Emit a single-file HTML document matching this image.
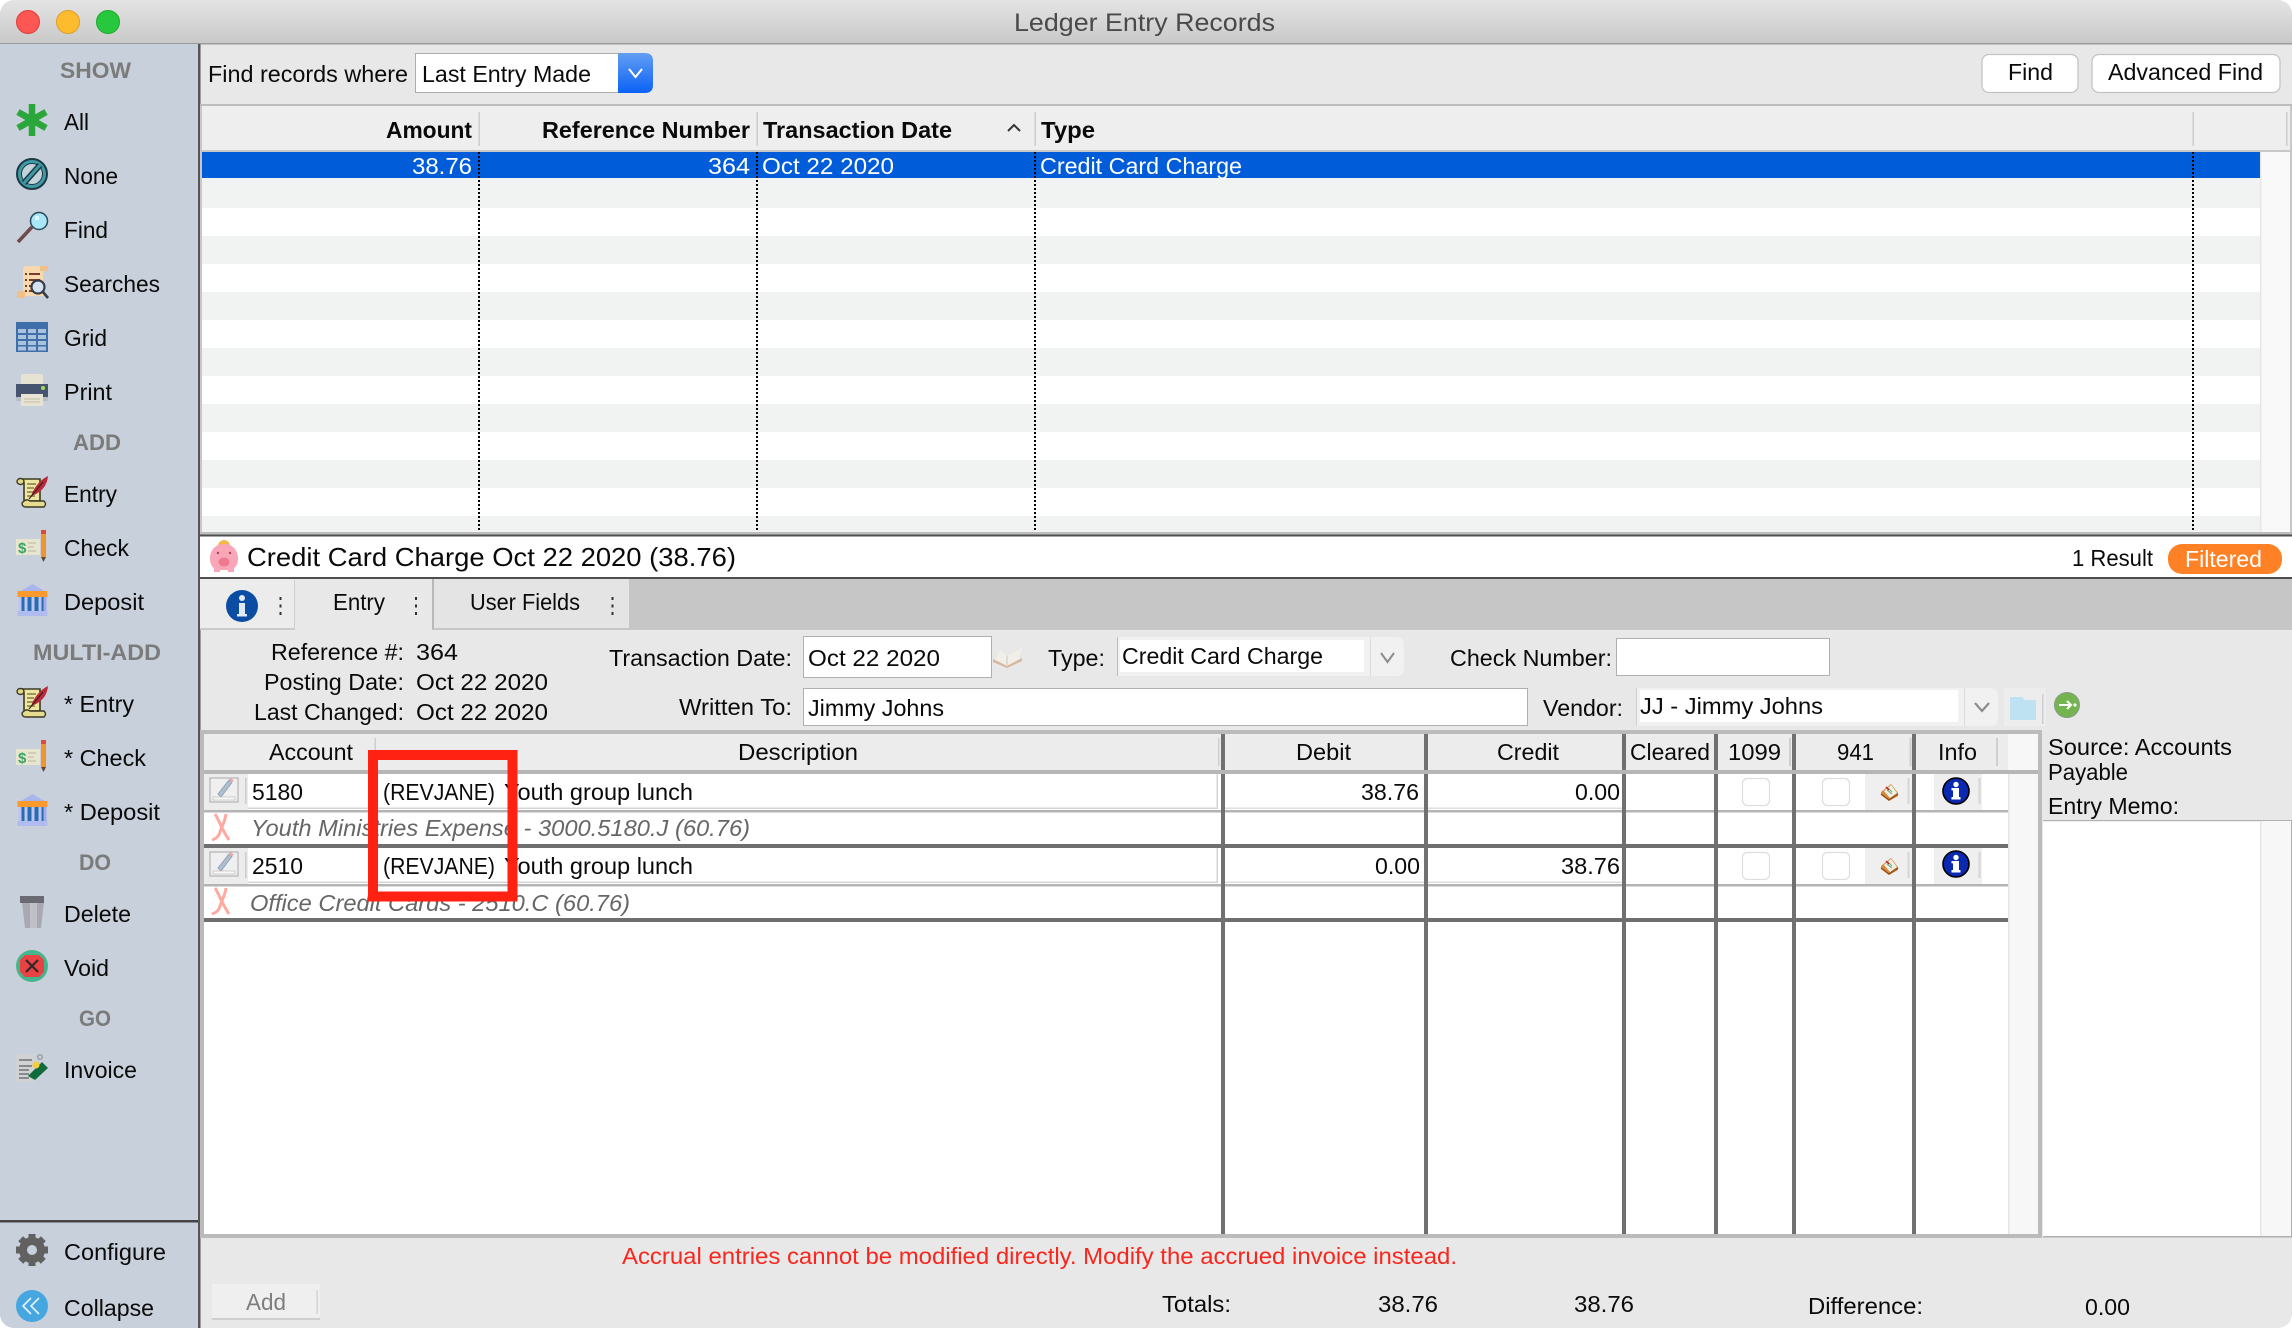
<!DOCTYPE html>
<html lang="en">
<head>
<meta charset="utf-8">
<title>Ledger Entry Records</title>
<style>
html,body{margin:0;padding:0;background:#fff;width:2292px;height:1328px;overflow:hidden}
svg{display:block}
text{font-family:"Liberation Sans",Arial,sans-serif;font-size:23px;fill:#0a0a0a;white-space:pre}
.b{font-weight:bold}
.h{font-weight:bold;font-size:22px;fill:#7b7b7b}
.i{font-style:italic;fill:#666}
.w{fill:#fff}
</style>
</head>
<body>
<svg xmlns="http://www.w3.org/2000/svg" width="2292" height="1328" viewBox="0 0 2292 1328">
<defs>
<linearGradient id="tb" x1="0" y1="0" x2="0" y2="1"><stop offset="0" stop-color="#e4e4e4"/><stop offset="1" stop-color="#c9c9c9"/></linearGradient>
<linearGradient id="bl" x1="0" y1="0" x2="0" y2="1"><stop offset="0" stop-color="#639ef2"/><stop offset="1" stop-color="#0a62f6"/></linearGradient>
<clipPath id="win"><rect x="0" y="0" width="2292" height="1328" rx="14"/></clipPath>
<g id="ientry">
<path d="M3 3H24V25H8V7Q8 4 3 5Z" fill="#efe6a0" stroke="#3c3a22" stroke-width="1.600"/>
<ellipse cx="4.500" cy="5.500" rx="3.500" ry="3" fill="#e2d888" stroke="#3c3a22" stroke-width="1.400"/>
<path d="M6 27Q10 22 14 25H28Q31 28 28 31H10Q6 31 6 27Z" fill="#e6dc90" stroke="#3c3a22" stroke-width="1.400"/>
<path d="M11 8h9M11 12h7M11 16h8M11 20h8" stroke="#6a6638" stroke-width="1.300"/>
<path d="M15 20Q20 6 32 0Q31 12 20 18Z" fill="#b82a3a"/>
<path d="M13 23L27 6" stroke="#3a1a1a" stroke-width="1"/>
</g>
<g id="icheck">
<rect x="0" y="9" width="24" height="16" fill="#e8e5cf"/>
<text x="2" y="23" style="font-size:15px;font-weight:bold;fill:#3aa46a">$</text>
<path d="M12 13h8M12 17h6M12 21h8" stroke="#c2c0a8" stroke-width="1.200"/>
<rect x="25" y="4" width="5" height="23" fill="#f0942c"/>
<rect x="25" y="0" width="5" height="4" fill="#de4a3a"/>
<path d="M25 27h5l-2.500 5z" fill="#5c4a3a"/>
</g>
<g id="idep">
<path d="M15 0L30 9H0Z" fill="#a9b6ee"/>
<rect x="0" y="7" width="30" height="6" fill="#fb9a2c"/>
<rect x="1" y="13" width="28" height="15" fill="#2a6cb0"/>
<rect x="7" y="13" width="3" height="15" fill="#bcc6f2"/><rect x="14" y="13" width="3" height="15" fill="#bcc6f2"/><rect x="21" y="13" width="3" height="15" fill="#bcc6f2"/>
<rect x="1" y="13" width="3" height="15" fill="#bcc6f2"/><rect x="26" y="13" width="3" height="15" fill="#a0acea"/>
<rect x="0" y="27" width="30" height="5" fill="#b0bbf0"/>
</g>
<g id="ipen">
<rect x="0" y="0" width="28" height="24" fill="#efefef" stroke="#a8a8a8" stroke-width="1"/>
<path d="M8 16L19 2l3 2.500L11 19z" fill="#aebfd0" stroke="#8a9ab0" stroke-width=".8"/>
<path d="M19 2l1.500-2 3.500 2.500-2 2z" fill="#eaa"/>
<path d="M3 19h22v3H3z" fill="#f7f7f7" stroke="#c4c4c4" stroke-width=".8"/>
</g>
<g id="ix" fill="none" stroke="#ffa9a0" stroke-width="3">
<path d="M3 0C6 4 10 16 17 26M14 0C13 8 9 14 8 18C7 22 5 24 0 26"/>
</g>
<g id="ibox">
<path d="M1 9L11 1 18 10 18 13 9 18 1 12Z" fill="#d98a3c"/>
<path d="M4 8L11 2 17 10 10 15Z" fill="#eef2e6"/>
<path d="M7 7l5 4M8 5l4 4" stroke="#7fb08a" stroke-width="1.200"/>
<path d="M6 4l3 3" stroke="#c02020" stroke-width="1.400"/>
<path d="M1 11L9 17 18 11" fill="none" stroke="#94501c" stroke-width="1.400"/>
</g>
<g id="iinfo">
<circle cx="13" cy="13" r="13" fill="#0a28b0" stroke="#000" stroke-width="1.600"/>
<rect x="10" y="10" width="6" height="11" fill="#fff"/><rect x="8.500" y="19" width="9" height="2.500" fill="#fff"/><rect x="8.500" y="10" width="5" height="2.400" fill="#fff"/>
<circle cx="13" cy="6.500" r="2.700" fill="#fff"/>
</g>
</defs>

<rect width="2292" height="1328" fill="#fff"/>
<g clip-path="url(#win)">
<rect width="2292" height="1328" fill="#e8e8e8"/>

<!-- Title bar -->
<rect width="2292" height="43" fill="url(#tb)"/>
<rect y="43" width="2292" height="1.500" fill="#9c9c9c"/>
<circle cx="28" cy="22" r="11.500" fill="#fc5753" stroke="#df3d38" stroke-width="1"/>
<circle cx="68" cy="22" r="11.500" fill="#fdbc2e" stroke="#de9f24" stroke-width="1"/>
<circle cx="108" cy="22" r="11.500" fill="#28c83e" stroke="#1aab2a" stroke-width="1"/>
<text x="1014" y="31" textLength="261" lengthAdjust="spacingAndGlyphs" style="font-size:25px;fill:#4a4a4a">Ledger Entry Records</text>

<!-- Sidebar -->
<rect y="44" width="198" height="1284" fill="#c8d0db"/>
<rect x="198" y="44" width="2.500" height="1284" fill="#555"/>
<rect y="1220" width="198" height="2.500" fill="#444"/>

<text class="h" x="60" y="78" textLength="71" lengthAdjust="spacingAndGlyphs">SHOW</text>
<text x="64" y="130" textLength="25" lengthAdjust="spacingAndGlyphs">All</text>
<text x="64" y="184" textLength="54" lengthAdjust="spacingAndGlyphs">None</text>
<text x="64" y="238" textLength="44" lengthAdjust="spacingAndGlyphs">Find</text>
<text x="64" y="292" textLength="96" lengthAdjust="spacingAndGlyphs">Searches</text>
<text x="64" y="346" textLength="43" lengthAdjust="spacingAndGlyphs">Grid</text>
<text x="64" y="400" textLength="48" lengthAdjust="spacingAndGlyphs">Print</text>
<text class="h" x="73" y="450" textLength="48" lengthAdjust="spacingAndGlyphs">ADD</text>
<text x="64" y="502" textLength="53" lengthAdjust="spacingAndGlyphs">Entry</text>
<text x="64" y="556" textLength="65" lengthAdjust="spacingAndGlyphs">Check</text>
<text x="64" y="610" textLength="80" lengthAdjust="spacingAndGlyphs">Deposit</text>
<text class="h" x="33" y="660" textLength="128" lengthAdjust="spacingAndGlyphs">MULTI-ADD</text>
<text x="64" y="712" textLength="70" lengthAdjust="spacingAndGlyphs">* Entry</text>
<text x="64" y="766" textLength="82" lengthAdjust="spacingAndGlyphs">* Check</text>
<text x="64" y="820" textLength="96" lengthAdjust="spacingAndGlyphs">* Deposit</text>
<text class="h" x="79" y="870" textLength="32" lengthAdjust="spacingAndGlyphs">DO</text>
<text x="64" y="922" textLength="67" lengthAdjust="spacingAndGlyphs">Delete</text>
<text x="64" y="976" textLength="45" lengthAdjust="spacingAndGlyphs">Void</text>
<text class="h" x="79" y="1026" textLength="32" lengthAdjust="spacingAndGlyphs">GO</text>
<text x="64" y="1078" textLength="73" lengthAdjust="spacingAndGlyphs">Invoice</text>
<text x="64" y="1260" textLength="102" lengthAdjust="spacingAndGlyphs">Configure</text>
<text x="64" y="1316" textLength="90" lengthAdjust="spacingAndGlyphs">Collapse</text>

<!-- sidebar icons -->
<g stroke="#2aa63a" stroke-width="6.500" fill="none"><path d="M32 104V136M18 112L46 128M46 112L18 128"/></g>
<circle cx="32" cy="174" r="15" fill="#3f9aa6" stroke="#1c3a44" stroke-width="2"/>
<circle cx="32" cy="174" r="10.500" fill="#c4d2da" stroke="#1c3a44" stroke-width="1"/>
<path d="M24 183L40 165" stroke="#1c3a44" stroke-width="6"/>
<path d="M24 183L40 165" stroke="#3f9aa6" stroke-width="3"/>
<path d="M18 242L32 227" stroke="#6f4a4a" stroke-width="3.500"/>
<circle cx="39" cy="221" r="8.500" fill="#a8e6f8" stroke="#2a4a5a" stroke-width="1.500"/>
<circle cx="37" cy="218" r="2" fill="#e8fbff"/>
<!-- searches -->
<path d="M17 291H23V270Q23 266 27 266H48V271H43V296H17Z" fill="#f8d8ae"/>
<rect x="17" y="291" width="8" height="7" fill="#f0c088"/>
<rect x="40" y="266" width="8" height="5" fill="#f0c088"/>
<g stroke="#7a3a2a" stroke-width="2">
<path d="M25 274h2M29 274h11M25 280h2M29 280h11M25 286h2M29 286h6M25 291h2M29 291h4"/>
</g>
<circle cx="38" cy="287" r="6.500" fill="#d3e3f2" stroke="#333c48" stroke-width="2.200"/>
<path d="M43 292l5 6" stroke="#333c48" stroke-width="2.600"/>
<!-- grid -->
<rect x="16" y="322" width="32" height="30" fill="#3f6fa8"/>
<g fill="#a9c2dd">
<rect x="18" y="329" width="8" height="4"/><rect x="28" y="329" width="8" height="4"/><rect x="38" y="329" width="8" height="4"/>
<rect x="18" y="335" width="8" height="4"/><rect x="28" y="335" width="8" height="4"/><rect x="38" y="335" width="8" height="4"/>
<rect x="18" y="341" width="8" height="4"/><rect x="28" y="341" width="8" height="4"/><rect x="38" y="341" width="8" height="4"/>
<rect x="18" y="346.500" width="8" height="4"/><rect x="28" y="346.500" width="8" height="4"/><rect x="38" y="346.500" width="8" height="4"/>
</g>
<!-- print -->
<rect x="21" y="374" width="22" height="12" fill="#e7e3d2"/>
<rect x="16" y="384" width="32" height="13" fill="#475470"/>
<rect x="16" y="397" width="32" height="4" fill="#b9bdc6"/>
<circle cx="43" cy="388" r="2" fill="#9ede5a"/>
<rect x="21" y="394" width="22" height="12" fill="#e7e3d2"/>
<path d="M24 399h16M24 402h16" stroke="#c4bfa8" stroke-width="1"/>
<use href="#ientry" x="16" y="476"/>
<use href="#icheck" x="16" y="530"/>
<use href="#idep" x="17.500" y="584"/>
<use href="#ientry" x="16" y="686"/>
<use href="#icheck" x="16" y="740"/>
<use href="#idep" x="17.500" y="794"/>
<!-- delete -->
<path d="M22 902H44L41 928H25Z" fill="#a9a9b2"/>
<path d="M30 902H37V928H30Z" fill="#c0c0c8"/>
<rect x="20" y="896" width="24" height="7" fill="#6a6a72"/>
<!-- void -->
<circle cx="32" cy="966" r="16" fill="#46b48c"/>
<path d="M25 955H39L44 960V972L39 977H25L20 972V960Z" fill="#e84242"/>
<path d="M26 960L38 972M38 960L26 972" stroke="#33262a" stroke-width="2.200"/>
<!-- invoice -->
<rect x="16" y="1054" width="19" height="28" fill="#d0d2d4"/>
<path d="M19 1060h13M19 1066h13M19 1070h10M19 1074h10M19 1078h10" stroke="#6f7274" stroke-width="1.500"/>
<path d="M28 1076L42 1062 48 1068 35 1080Z" fill="#0f6b3c"/>
<circle cx="36" cy="1065" r="3.500" fill="#f8cc3a"/>
<circle cx="40" cy="1057" r="2.300" fill="none" stroke="#888" stroke-width="1"/>
<!-- gear -->
<g transform="translate(32 1250)" fill="#616161">
<circle r="9" fill="none" stroke="#616161" stroke-width="8"/>
<rect x="-3.500" y="-16" width="7" height="6"/>
<rect x="-3.500" y="-16" width="7" height="6" transform="rotate(45)"/>
<rect x="-3.500" y="-16" width="7" height="6" transform="rotate(90)"/>
<rect x="-3.500" y="-16" width="7" height="6" transform="rotate(135)"/>
<rect x="-3.500" y="-16" width="7" height="6" transform="rotate(180)"/>
<rect x="-3.500" y="-16" width="7" height="6" transform="rotate(225)"/>
<rect x="-3.500" y="-16" width="7" height="6" transform="rotate(270)"/>
<rect x="-3.500" y="-16" width="7" height="6" transform="rotate(315)"/>
</g>
<circle cx="32" cy="1306" r="16" fill="#46a6e0"/>
<path d="M31 1298L23 1306 31 1314M39 1298L31 1306 39 1314" fill="none" stroke="#e8f4fc" stroke-width="1.600"/>

<!-- Find row -->
<text x="208" y="82" textLength="200" lengthAdjust="spacingAndGlyphs">Find records where</text>
<rect x="415.500" y="53.500" width="220" height="39" fill="#fff" stroke="#adadad"/>
<path d="M618 53H645Q653 53 653 61V85Q653 93 645 93H618Z" fill="url(#bl)"/>
<path d="M629 69L635.500 77 642 69" fill="none" stroke="#fff" stroke-width="2"/>
<text x="422" y="82" textLength="169" lengthAdjust="spacingAndGlyphs">Last Entry Made</text>
<rect x="1982" y="54.500" width="96" height="38" rx="7" fill="#fff" stroke="#c2c2c2" stroke-width="1.200"/>
<rect x="2092" y="54.500" width="188" height="38" rx="7" fill="#fff" stroke="#c2c2c2" stroke-width="1.200"/>
<text x="2008" y="80" textLength="45" lengthAdjust="spacingAndGlyphs">Find</text>
<text x="2108" y="80" textLength="155" lengthAdjust="spacingAndGlyphs">Advanced Find</text>

<!-- Upper table -->
<rect x="200" y="104" width="2092" height="2" fill="#bdbdbd"/>
<rect x="200" y="106" width="2.500" height="430" fill="#c8c8c8"/>
<rect x="2290" y="106" width="2" height="430" fill="#c8c8c8"/>
<rect x="202" y="106" width="2088" height="44" fill="#eeeeee"/>
<rect x="202" y="150" width="2088" height="2" fill="#c8c8c8"/>
<g fill="#cccccc">
<rect x="478.500" y="112" width="1.500" height="34"/><rect x="756.500" y="112" width="1.500" height="34"/><rect x="1034.500" y="112" width="1.500" height="34"/><rect x="2192.500" y="112" width="1.500" height="34"/><rect x="2286" y="112" width="1.500" height="34"/>
</g>
<rect x="202" y="152" width="2088" height="380" fill="#ffffff"/>
<rect x="2260" y="152" width="30" height="380" fill="#f9f9f9"/>
<rect x="2260" y="152" width="1.500" height="380" fill="#e6e6e6"/>
<g fill="#f1f3f3">
<rect x="202" y="178" width="2058" height="30"/><rect x="202" y="236" width="2058" height="28"/><rect x="202" y="292" width="2058" height="28"/><rect x="202" y="348" width="2058" height="28"/><rect x="202" y="404" width="2058" height="28"/><rect x="202" y="460" width="2058" height="28"/><rect x="202" y="516" width="2058" height="16"/>
</g>
<rect x="202" y="152" width="2058" height="26" fill="#005cd9"/>
<g stroke="#000" stroke-width="2" stroke-dasharray="2 2" fill="none">
<path d="M479 152V531M757 152V531M1035 152V531M2193 152V531"/>
</g>
<text class="b" x="386" y="138" textLength="86" lengthAdjust="spacingAndGlyphs">Amount</text>
<text class="b" x="542" y="138" textLength="208" lengthAdjust="spacingAndGlyphs">Reference Number</text>
<text class="b" x="763" y="138" textLength="189" lengthAdjust="spacingAndGlyphs">Transaction Date</text>
<path d="M1008 131L1014 125 1020 131" fill="none" stroke="#333" stroke-width="2"/>
<text class="b" x="1041" y="138" textLength="54" lengthAdjust="spacingAndGlyphs">Type</text>
<text class="w" x="412" y="174" textLength="60" lengthAdjust="spacingAndGlyphs">38.76</text>
<text class="w" x="708" y="174" textLength="42" lengthAdjust="spacingAndGlyphs">364</text>
<text class="w" x="762" y="174" textLength="132" lengthAdjust="spacingAndGlyphs">Oct 22 2020</text>
<text class="w" x="1040" y="174" textLength="202" lengthAdjust="spacingAndGlyphs">Credit Card Charge</text>
<rect x="200" y="532" width="2092" height="3" fill="#bdbdbd"/>
<rect x="200" y="534.500" width="2092" height="2" fill="#4f4f4f"/>

<!-- Record title -->
<rect x="200" y="536.500" width="2092" height="41" fill="#fff"/>
<rect x="200" y="577" width="2092" height="2" fill="#4f4f4f"/>
<circle cx="224" cy="546" r="6" fill="#f5b84a"/>
<path d="M224 544C214 544 210 552 210 558C210 564 212 567 214 568V572H220V570H228V572H234V568C236 567 238 564 238 558C238 552 234 544 224 544Z" fill="#f8a6b8"/>
<ellipse cx="224" cy="562" rx="5.500" ry="4.500" fill="#ef7a90"/>
<circle cx="218" cy="553" r="1.200" fill="#a04458"/><circle cx="230" cy="553" r="1.200" fill="#a04458"/>
<text x="247" y="566" textLength="489" lengthAdjust="spacingAndGlyphs" style="font-size:26px">Credit Card Charge Oct 22 2020 (38.76)</text>
<text x="2072" y="566" textLength="81" lengthAdjust="spacingAndGlyphs">1 Result</text>
<rect x="2168" y="544" width="114" height="30" rx="14" fill="#ff8126"/>
<text class="w" x="2185" y="567" textLength="77" lengthAdjust="spacingAndGlyphs">Filtered</text>

<!-- Tabs -->
<rect x="200" y="579" width="2092" height="51" fill="#c6c6c6"/>
<rect x="200" y="579" width="95" height="50" fill="#ececec"/>
<rect x="200" y="628" width="95" height="2" fill="#cbcbcb"/>
<rect x="294" y="580" width="1.500" height="50" fill="#cfcfcf"/>
<ellipse cx="242" cy="606" rx="16" ry="16" fill="#0a4da2"/>
<rect x="239" y="603" width="6" height="13" fill="#dfe8f4"/><rect x="237" y="614" width="10" height="2.500" fill="#dfe8f4"/>
<circle cx="242" cy="598" r="3" fill="#dfe8f4"/>
<rect x="279.500" y="597" width="2" height="3" fill="#333"/><rect x="279.500" y="604.500" width="2" height="3" fill="#333"/><rect x="279.500" y="612" width="2" height="3" fill="#333"/>
<rect x="295" y="579" width="137" height="52" fill="#e8e8e8"/>
<text x="333" y="610" textLength="52" lengthAdjust="spacingAndGlyphs">Entry</text>
<rect x="415" y="597" width="2" height="3" fill="#333"/><rect x="415" y="604.500" width="2" height="3" fill="#333"/><rect x="415" y="612" width="2" height="3" fill="#333"/>
<rect x="432" y="579" width="2" height="50" fill="#b8b8b8"/>
<rect x="434" y="579" width="195" height="49" fill="#e4e4e4"/>
<text x="470" y="610" textLength="110" lengthAdjust="spacingAndGlyphs">User Fields</text>
<rect x="611.500" y="597" width="2" height="3" fill="#333"/><rect x="611.500" y="604.500" width="2" height="3" fill="#333"/><rect x="611.500" y="612" width="2" height="3" fill="#333"/>

<!-- Form -->
<text x="271" y="660" textLength="133" lengthAdjust="spacingAndGlyphs">Reference #:</text>
<text x="416" y="660" textLength="42" lengthAdjust="spacingAndGlyphs">364</text>
<text x="264" y="690" textLength="140" lengthAdjust="spacingAndGlyphs">Posting Date:</text>
<text x="416" y="690" textLength="132" lengthAdjust="spacingAndGlyphs">Oct 22 2020</text>
<text x="254" y="720" textLength="150" lengthAdjust="spacingAndGlyphs">Last Changed:</text>
<text x="416" y="720" textLength="132" lengthAdjust="spacingAndGlyphs">Oct 22 2020</text>
<text x="609" y="666" textLength="183" lengthAdjust="spacingAndGlyphs">Transaction Date:</text>
<rect x="803.500" y="636.500" width="188" height="41" fill="#fff" stroke="#b0b0b0"/>
<text x="808" y="666" textLength="132" lengthAdjust="spacingAndGlyphs">Oct 22 2020</text>
<path d="M1000 650L1007 656 1022 648 1019 659 1007 665 995 660Z" fill="#f2efe8"/>
<path d="M993 659L1007 666 1022 658V661L1007 668 993 662Z" fill="#d8b79c"/>
<path d="M1007 656V665" stroke="#cfc6b8" stroke-width="1"/>
<text x="1048" y="666" textLength="57" lengthAdjust="spacingAndGlyphs">Type:</text>
<path d="M1117 637H1396Q1404 637 1404 645V668Q1404 676 1396 676H1117Z" fill="#f1f1f1"/>
<rect x="1120" y="640" width="244" height="32" fill="#fff"/>
<rect x="1370" y="637" width="1" height="39" fill="#dcdcdc"/>
<rect x="1117" y="637" width="1" height="39" fill="#bbbbbb"/>
<path d="M1381 653L1387.500 662 1394 653" fill="none" stroke="#8c8c8c" stroke-width="2"/>
<text x="1122" y="664" textLength="201" lengthAdjust="spacingAndGlyphs">Credit Card Charge</text>
<text x="1450" y="666" textLength="162" lengthAdjust="spacingAndGlyphs">Check Number:</text>
<rect x="1616.500" y="638.500" width="213" height="37" fill="#fff" stroke="#b0b0b0"/>
<text x="679" y="715" textLength="113" lengthAdjust="spacingAndGlyphs">Written To:</text>
<rect x="803.500" y="688.500" width="724" height="37" fill="#fff" stroke="#b0b0b0"/>
<text x="808" y="716" textLength="136" lengthAdjust="spacingAndGlyphs">Jimmy Johns</text>
<text x="1543" y="716" textLength="80" lengthAdjust="spacingAndGlyphs">Vendor:</text>
<path d="M1636 688H1990Q1998 688 1998 696V718Q1998 726 1990 726H1636Z" fill="#f1f1f1"/>
<rect x="1640" y="690" width="318" height="32" fill="#fff"/>
<rect x="1964" y="688" width="1" height="38" fill="#dcdcdc"/>
<rect x="1636" y="688" width="1" height="38" fill="#d0d0d0"/>
<path d="M1975 703L1982 711 1989 703" fill="none" stroke="#8c8c8c" stroke-width="2.200"/>
<text x="1640" y="714" textLength="183" lengthAdjust="spacingAndGlyphs">JJ - Jimmy Johns</text>
<rect x="2004" y="688" width="42" height="38" fill="#ededed"/>
<path d="M2010 697H2022L2025 700H2036V720H2010Z" fill="#bfe2f2"/>
<rect x="2042" y="694" width="1.500" height="30" fill="#cfcfcf"/>
<circle cx="2067" cy="705" r="12.500" fill="#74b450" stroke="#8a9a8a" stroke-width="1"/>
<path d="M2059 705H2071M2067 701L2071 705 2067 709" fill="none" stroke="#fff" stroke-width="2"/>
<circle cx="2075" cy="705" r="1.600" fill="#fff"/>

<!-- Grid frame -->
<rect x="200" y="730" width="1842" height="4" fill="#bbbbbb"/>
<rect x="200" y="730" width="4" height="508" fill="#bbbbbb"/>
<rect x="204" y="734" width="1834" height="36" fill="#ececec"/>
<rect x="204" y="770" width="1834" height="4" fill="#b6b6b6"/>
<rect x="204" y="774" width="1834" height="460" fill="#fff"/>
<rect x="2008" y="734" width="30" height="500" fill="#f7f7f7"/>
<rect x="2008" y="774" width="1.500" height="460" fill="#e4e4e4"/>
<rect x="204" y="734" width="1804" height="36" fill="#ececec"/>
<rect x="2038" y="730" width="4" height="508" fill="#bbbbbb"/>
<rect x="200" y="1234" width="1842" height="4" fill="#bbbbbb"/>
<rect x="374.500" y="738" width="1.500" height="28" fill="#cfcfcf"/>
<rect x="1218" y="738" width="1.500" height="28" fill="#cfcfcf"/>
<rect x="1789" y="738" width="2" height="28" fill="#cfcfcf"/>
<rect x="1909.500" y="738" width="2" height="28" fill="#cfcfcf"/>
<rect x="1996" y="738" width="2" height="28" fill="#cfcfcf"/>

<!-- row backgrounds -->
<rect x="204" y="774" width="44" height="36" fill="#ececec"/>
<rect x="204" y="848" width="44" height="36" fill="#ececec"/>
<rect x="245" y="778" width="1.500" height="26" fill="#cccccc"/>
<rect x="245" y="852" width="1.500" height="26" fill="#cccccc"/>
<rect x="248" y="807.500" width="969" height="1.500" fill="#d4d4d4"/>
<rect x="248" y="881.500" width="969" height="1.500" fill="#d4d4d4"/>
<rect x="1216.500" y="774" width="1.500" height="35" fill="#d4d4d4"/>
<rect x="1216.500" y="848" width="1.500" height="35" fill="#d4d4d4"/>
<rect x="1225" y="807.500" width="400" height="1.500" fill="#dedede"/>
<rect x="1225" y="881.500" width="400" height="1.500" fill="#dedede"/>
<rect x="204" y="810" width="1804" height="2.500" fill="#b4b4b4"/>
<rect x="204" y="884" width="1804" height="2.500" fill="#b4b4b4"/>
<rect x="1865" y="774" width="47" height="36" fill="#efefef"/>
<rect x="1865" y="848" width="47" height="36" fill="#efefef"/>
<rect x="1934" y="774" width="48" height="36" fill="#efefef"/>
<rect x="1934" y="848" width="48" height="36" fill="#efefef"/>
<rect x="1907.500" y="778" width="2" height="26" fill="#d6d6d6"/>
<rect x="1907.500" y="852" width="2" height="26" fill="#d6d6d6"/>
<rect x="1978.500" y="778" width="2" height="26" fill="#d6d6d6"/>
<rect x="1978.500" y="852" width="2" height="26" fill="#d6d6d6"/>
<rect x="204" y="844" width="1804" height="4" fill="#6f6f6f"/>
<rect x="204" y="918" width="1804" height="4" fill="#6f6f6f"/>

<!-- vertical columns -->
<g fill="#707070">
<rect x="1221" y="734" width="4" height="500"/>
<rect x="1424" y="734" width="4" height="500"/>
<rect x="1622" y="734" width="4" height="500"/>
<rect x="1714" y="734" width="4" height="500"/>
<rect x="1792" y="734" width="4" height="500"/>
<rect x="1912" y="734" width="4" height="500"/>
</g>
<rect x="204" y="770" width="1834" height="4" fill="#b6b6b6"/>

<!-- grid headers -->
<text x="269" y="760" textLength="84" lengthAdjust="spacingAndGlyphs">Account</text>
<text x="738" y="760" textLength="120" lengthAdjust="spacingAndGlyphs">Description</text>
<text x="1296" y="760" textLength="55" lengthAdjust="spacingAndGlyphs">Debit</text>
<text x="1497" y="760" textLength="62" lengthAdjust="spacingAndGlyphs">Credit</text>
<text x="1630" y="760" textLength="80" lengthAdjust="spacingAndGlyphs">Cleared</text>
<text x="1728" y="760" textLength="53" lengthAdjust="spacingAndGlyphs">1099</text>
<text x="1837" y="760" textLength="37" lengthAdjust="spacingAndGlyphs">941</text>
<text x="1938" y="760" textLength="39" lengthAdjust="spacingAndGlyphs">Info</text>

<!-- rows -->
<use href="#ipen" x="210" y="778"/>
<use href="#ipen" x="210" y="852"/>
<use href="#ix" x="212" y="814"/>
<use href="#ix" x="212" y="888"/>
<text x="252" y="800" textLength="51" lengthAdjust="spacingAndGlyphs">5180</text>
<text x="252" y="874" textLength="51" lengthAdjust="spacingAndGlyphs">2510</text>
<text x="383" y="800" textLength="112" lengthAdjust="spacingAndGlyphs">(REVJANE)</text>
<text x="504" y="800" textLength="189" lengthAdjust="spacingAndGlyphs">Youth group lunch</text>
<text x="383" y="874" textLength="112" lengthAdjust="spacingAndGlyphs">(REVJANE)</text>
<text x="504" y="874" textLength="189" lengthAdjust="spacingAndGlyphs">Youth group lunch</text>
<text class="i" x="251" y="836" textLength="499" lengthAdjust="spacingAndGlyphs">Youth Ministries Expense - 3000.5180.J (60.76)</text>
<text class="i" x="250" y="911" textLength="380" lengthAdjust="spacingAndGlyphs">Office Credit Cards - 2510.C (60.76)</text>
<text x="1361" y="800" textLength="58" lengthAdjust="spacingAndGlyphs">38.76</text>
<text x="1575" y="800" textLength="45" lengthAdjust="spacingAndGlyphs">0.00</text>
<text x="1375" y="874" textLength="45" lengthAdjust="spacingAndGlyphs">0.00</text>
<text x="1561" y="874" textLength="59" lengthAdjust="spacingAndGlyphs">38.76</text>
<g fill="#fff" stroke="#dddddd" stroke-width="1.200">
<rect x="1742.500" y="778.500" width="27" height="27" rx="5"/>
<rect x="1822.500" y="778.500" width="27" height="27" rx="5"/>
<rect x="1742.500" y="852.500" width="27" height="27" rx="5"/>
<rect x="1822.500" y="852.500" width="27" height="27" rx="5"/>
</g>
<use href="#ibox" x="1880" y="783"/>
<use href="#ibox" x="1880" y="857"/>
<use href="#iinfo" x="1943" y="778"/>
<use href="#iinfo" x="1943" y="851"/>

<!-- Red box -->
<rect x="373" y="755" width="139.500" height="141.500" fill="none" stroke="#ff2213" stroke-width="10"/>

<!-- Right pane -->
<text x="2048" y="755" textLength="184" lengthAdjust="spacingAndGlyphs">Source: Accounts</text>
<text x="2048" y="780" textLength="80" lengthAdjust="spacingAndGlyphs">Payable</text>
<text x="2048" y="814" textLength="131" lengthAdjust="spacingAndGlyphs">Entry Memo:</text>
<rect x="2043" y="820" width="249" height="417" fill="#fff"/>
<rect x="2043" y="820" width="249" height="1.200" fill="#b0b0b0"/>
<rect x="2043" y="1236" width="249" height="1.500" fill="#b0b0b0"/>
<rect x="2260" y="821" width="31" height="415" fill="#f7f7f7"/>
<rect x="2260" y="821" width="1.500" height="415" fill="#e4e4e4"/>
<rect x="2291" y="820" width="1" height="417" fill="#b0b0b0"/>

<!-- Footer -->
<text x="622" y="1264" textLength="835" lengthAdjust="spacingAndGlyphs" style="fill:#f8261c">Accrual entries cannot be modified directly. Modify the accrued invoice instead.</text>
<rect x="212" y="1284" width="108" height="36" fill="#efefef"/>
<rect x="212" y="1318" width="108" height="2" fill="#cfcfcf"/>
<rect x="316.500" y="1290" width="1.200" height="24" fill="#cfcfcf"/>
<text x="246" y="1310" textLength="40" lengthAdjust="spacingAndGlyphs" style="fill:#7e7e7e">Add</text>
<text x="1162" y="1312" textLength="69" lengthAdjust="spacingAndGlyphs">Totals:</text>
<text x="1378" y="1312" textLength="60" lengthAdjust="spacingAndGlyphs">38.76</text>
<text x="1574" y="1312" textLength="60" lengthAdjust="spacingAndGlyphs">38.76</text>
<text x="1808" y="1314" textLength="115" lengthAdjust="spacingAndGlyphs">Difference:</text>
<text x="2085" y="1315" textLength="45" lengthAdjust="spacingAndGlyphs">0.00</text>
</g>
</svg>
</body>
</html>
